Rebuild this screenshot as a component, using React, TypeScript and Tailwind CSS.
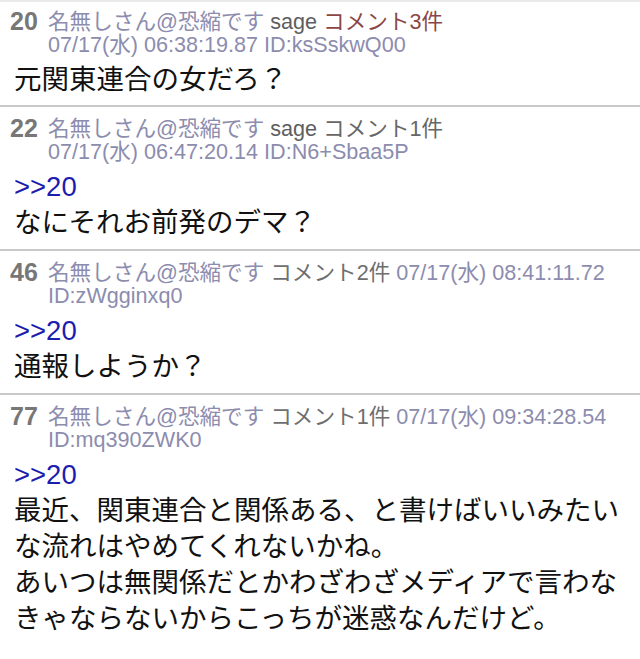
import React from 'react';

type Post = {
  no: number;
  sage?: boolean;
  comments: string;
  commentColor: string;
  date: string;
  id: string;
  anchor?: string;
  lines: string[];
  first?: boolean;
  last?: boolean;
};

const posts: Post[] = [
  {
    no: 20,
    sage: true,
    comments: 'コメント3件',
    commentColor: 'text-[#8a4646]',
    date: '07/17(水) 06:38:19.87',
    id: 'ID:ksSskwQ00',
    lines: ['元関東連合の女だろ？'],
    first: true,
  },
  {
    no: 22,
    sage: true,
    comments: 'コメント1件',
    commentColor: 'text-[#666666]',
    date: '07/17(水) 06:47:20.14',
    id: 'ID:N6+Sbaa5P',
    anchor: '>>20',
    lines: ['なにそれお前発のデマ？'],
  },
  {
    no: 46,
    comments: 'コメント2件',
    commentColor: 'text-[#6e6e6e]',
    date: '07/17(水) 08:41:11.72',
    id: 'ID:zWgginxq0',
    anchor: '>>20',
    lines: ['通報しようか？'],
  },
  {
    no: 77,
    comments: 'コメント1件',
    commentColor: 'text-[#6e6e6e]',
    date: '07/17(水) 09:34:28.54',
    id: 'ID:mq390ZWK0',
    anchor: '>>20',
    lines: [
      '最近、関東連合と関係ある、と書けばいいみたい',
      'な流れはやめてくれないかね。',
      'あいつは無関係だとかわざわざメディアで言わな',
      'きゃならないからこっちが迷惑なんだけど。',
    ],
    last: true,
  },
];

function PostItem({ post }: { post: Post }) {
  return (
    <div
      className={`${post.first ? 'pt-[8px] pb-[7px]' : 'pt-[10px] pb-[8px]'} ${
        post.last ? '' : 'border-b-2 border-[#c9c9c9]'
      }`}
    >
      <div className="flex pl-[10px] text-[21.6px] leading-[23px]">
        <span className="w-[38px] shrink-0 font-bold text-[25px] text-[#777777]">{post.no}</span>
        <div className="flex-1 text-[#8c8cae]">
          <span className="whitespace-nowrap">名無しさん@恐縮です</span>{' '}
          {post.sage && (
            <>
              <span className="whitespace-nowrap text-[#5e5e5e]">sage</span>{' '}
            </>
          )}
          <span className={`whitespace-nowrap ${post.commentColor}`}>{post.comments}</span>{' '}
          <span className="whitespace-nowrap">{post.date}</span>{' '}
          <span className="whitespace-nowrap">{post.id}</span>
        </div>
      </div>
      <div className="mt-[6px] px-[14px] text-[27.5px] leading-[36px] text-[#111111]">
        {post.anchor && <div className="text-[#1c1cae]">{post.anchor}</div>}
        {post.lines.map((l, i) => (
          <div key={i}>{l}</div>
        ))}
      </div>
    </div>
  );
}

export default function App() {
  return (
    <div
      className="w-[640px] h-[659px] overflow-hidden bg-white border-t-2 border-[#e9e9e9]"
      style={{ fontFamily: '"Liberation Sans", "Noto Sans CJK JP", sans-serif' }}
    >
      {posts.map((p) => (
        <PostItem key={p.no} post={p} />
      ))}
    </div>
  );
}
